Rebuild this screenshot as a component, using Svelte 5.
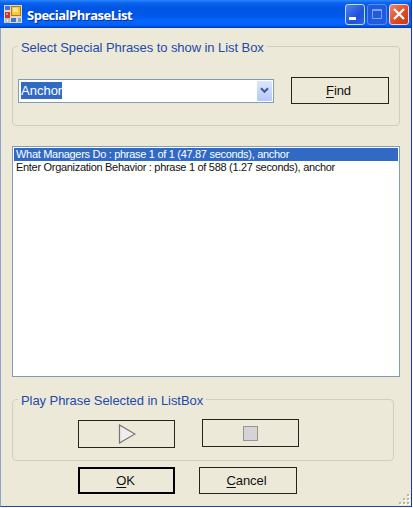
<script>
  const phrases = [
    { text: 'What Managers Do : phrase 1 of 1 (47.87 seconds), anchor', selected: true },
    { text: 'Enter Organization Behavior : phrase 1 of 588 (1.27 seconds), anchor', selected: false }
  ];
</script>

<div class="window">
  <header>
    <svg class="app" width="18" height="18" viewBox="0 0 18 18">
      <rect width="18" height="18" fill="#ddd9cc" />
      <rect x="1" y="1" width="5" height="4" fill="#4773cf" />
      <rect x="1" y="7" width="5" height="6" fill="#c8382c" />
      <rect x="2" y="8" width="2" height="2" fill="#f08a78" />
      <rect x="7.5" y="1.5" width="9" height="9" fill="#f8c837" stroke="#a97c20" />
      <rect x="9" y="3" width="5" height="4" fill="#ffe68a" />
      <rect x="2" y="14" width="3" height="3" fill="#fff" stroke="#777" stroke-width=".6" />
      <rect x="7" y="13" width="5" height="4" fill="#4773cf" />
      <rect x="14" y="13" width="3" height="4" fill="#7f9fdc" />
    </svg>
    <h1>SpecialPhraseList</h1>
    <div class="controls">
      <button class="ctl" aria-label="Minimize"><svg width="18" height="18" viewBox="0 0 18 18"><rect x="3" y="12" width="7" height="3" fill="#fff" /></svg></button>
      <button class="ctl max" aria-label="Maximize"><svg width="18" height="18" viewBox="0 0 18 18"><path d="M4.5 4.5h9v9h-9zM4 5.5h10" fill="none" stroke="#7fa4f4" /></svg></button>
      <button class="ctl close" aria-label="Close"><svg width="18" height="18" viewBox="0 0 18 18"><path d="M4 4l10 10M14 4L4 14" fill="none" stroke="#fff" stroke-width="2.3" /></svg></button>
    </div>
  </header>

  <main>
    <section class="group find">
      <h2>Select Special Phrases to show in List Box</h2>
      <div class="row">
        <div class="combo">
          <span class="value">Anchor</span>
          <span class="arrow"><svg width="9" height="7" viewBox="0 0 9 7"><path d="M1 1.300l3.500 3.500 3.500-3.500" fill="none" stroke="#435f91" stroke-width="2.200" /></svg></span>
        </div>
        <button class="btn"><span><u>F</u>ind</span></button>
      </div>
    </section>

    <ul class="list">
      {#each phrases as p}
        <li class:selected={p.selected}>{p.text}</li>
      {/each}
    </ul>

    <section class="group play">
      <h2>Play Phrase Selected in ListBox</h2>
      <div class="row">
        <button class="btn tool" aria-label="Play"><svg width="18" height="20" viewBox="0 0 18 20"><path d="M1.500 1v18L17 10z" fill="#eeedf0" stroke="#77736f" stroke-width="1.200" /></svg></button>
        <button class="btn tool stop" aria-label="Stop"><svg width="15" height="15" viewBox="0 0 15 15"><rect x=".5" y=".5" width="14" height="14" fill="#d5d2d8" stroke="#98948c" /></svg></button>
      </div>
    </section>

    <footer>
      <button class="btn ok"><span><u>O</u>K</span></button>
      <button class="btn"><span><u>C</u>ancel</span></button>
    </footer>
  </main>
  <svg class="grip" width="12" height="12" viewBox="0 0 12 12">
    {#each [[8, 0], [4, 4], [8, 4], [0, 8], [4, 8], [8, 8]] as [x, y]}
      <rect x={x + 1} y={y + 1} width="2" height="2" fill="#fff" />
      <rect {x} {y} width="2" height="2" fill="#b8b4a3" />
    {/each}
  </svg>
</div>

<style>
  :global(body) { background: #fff; overflow: hidden; }
  * { box-sizing: border-box; margin: 0; padding: 0; }
  .window {
    position: relative; width: 412px; height: 507px; background: #ece9d8;
    border-right: 1px solid #1b34b0; border-bottom: 1px solid #2143b8; border-left: 1px solid #8fa3cf;
    font: 13px 'Liberation Sans', Arial, sans-serif; color: #111;
  }
  header {
    display: flex; align-items: center; height: 28px; margin-left: -1px; padding: 2px 2px 0 4px;
    background: linear-gradient(#2a86ff 0, #0a62ee 3px, #0055e2 8px, #0057e8 15px, #0366fe 21px, #0261fa 25px, #0038b8 28px);
  }
  .app { display: block; margin-top: -2px; }
  h1 { flex: 1; margin-left: 5px; font: bold 13px/18px 'Open Sans', 'Noto Sans', sans-serif; color: #fff; white-space: nowrap; text-shadow: 1px 1px #0a2f8c; letter-spacing: -0.5px; }
  .controls { display: flex; gap: 2px; margin-top: -2px; }
  .ctl { width: 20px; height: 21px; border: 1px solid #c9d8fa; border-radius: 3px; background: linear-gradient(135deg, #4f83f0, #1f52d8 60%, #2c63e2); }
  .ctl svg { display: block; }
  .max { border-color: #5d8cf0; background: #1f5ae0; }
  .close { border-color: #f4d6d0; background: linear-gradient(135deg, #ee8468, #dd4822 60%, #c73a14); }
  main { padding: 11px 12px 0 11px; }
  .group { width: 388px; border: 1px solid #d0cfbe; border-radius: 4px; }
  .find { height: 80px; margin-top: 7px; }
  h2 { display: table; height: 16px; margin: -7px 0 0 5px; padding: 0 3px; background: #ece9d8; font: 13px/16px 'Liberation Sans', Arial, sans-serif; letter-spacing: -0.07px; color: #2449a8; white-space: nowrap; }
  .row { display: flex; }
  .find .row { padding: 21px 0 0 5px; gap: 17px; align-items: center; }
  .combo { display: flex; width: 256px; height: 24px; border: 1px solid #7f9db9; background: #fff; padding: 1px; }
  .value { height: 17px; margin: 1px auto 0 1px; background: #316ac5; color: #fff; line-height: 17px; }
  .arrow { display: flex; align-items: center; justify-content: center; width: 15px; background: linear-gradient(#dbe5fe, #b4c9f8); border-radius: 1px; }
  .btn { display: flex; align-items: center; justify-content: center; width: 98px; height: 27px; padding-right: 3px; border: 1px solid #25251d; background: #ece9d8; font: 13px 'Liberation Sans', Arial, sans-serif; letter-spacing: -0.1px; color: #111; }
  u { text-decoration-thickness: 1px; text-underline-offset: 2px; }
  .list { height: 231px; margin-top: 20px; border: 1px solid #7f9db9; background: #fff; padding: 1px; list-style: none; width: 388px; font-size: 11px; letter-spacing: -0.3px; }
  li { height: 13px; padding-left: 2px; line-height: 13px; white-space: nowrap; }
  .selected { background: #316ac5; color: #fff; }
  .play { width: 382px; height: 62px; margin-top: 22px; }
  .play .row { padding: 11px 0 0 65px; gap: 27px; }
  footer { display: flex; gap: 24px; padding: 6px 0 0 66px; }
  .ok { width: 97px; border: 2px solid #000; padding-right: 2px; }
  .tool { width: 97px; height: 28px; padding: 0; }
  .stop { margin-top: -1px; }
  .grip { position: absolute; right: 0; bottom: 0; }
</style>
